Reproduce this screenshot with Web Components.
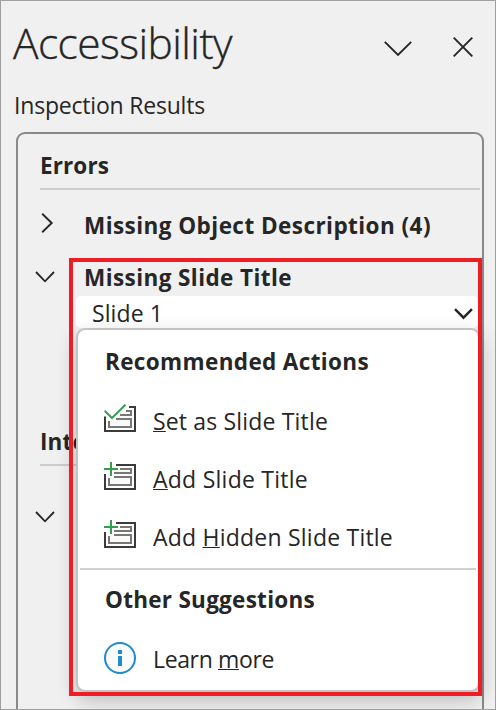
<!DOCTYPE html>
<html lang="en"><head><meta charset="utf-8"><title>Accessibility</title>
<style>
html,body{margin:0;height:100%;overflow:hidden}
body{font-family:"Open Sans","Noto Sans",sans-serif;color:#262626;background:#f0f0f0}
</style></head><body>
<a11y-pane></a11y-pane>
<script>
const define=(name,html,init)=>customElements.define(name,class extends HTMLElement{
  constructor(){super();this.attachShadow({mode:'open'}).innerHTML=html;}
  connectedCallback(){if(init)init.call(this);}
});

// One line of text, tracked so that it spans the width given in "span".
define('ui-text',`<style>
:host{display:block;box-sizing:border-box;font-size:23px;line-height:32px;height:32px;white-space:nowrap}
:host([bold]){font-weight:700;font-size:22.5px;padding-top:1px}
:host([title-size]){font-size:42.5px;line-height:60px;height:60px;font-weight:300;-webkit-text-stroke:.35px #262626}
span{display:inline-block}
::slotted(u){text-decoration:underline;text-decoration-thickness:1px;text-underline-offset:1px;text-decoration-skip-ink:none}
</style><span><slot></slot></span>`,function(){
  const s=this.shadowRoot.querySelector('span'),w=+this.getAttribute('span');
  const slot=s.firstChild;
  const fit=()=>{
    const n=slot.assignedNodes({flatten:true}).map(x=>x.textContent).join('').length;
    if(!w||!n)return;
    s.style.letterSpacing='0px';
    s.style.letterSpacing=(w-s.getBoundingClientRect().width)/n+'px';
  };
  slot.addEventListener('slotchange',fit);
  fit();
});

const shapes={
  down:[28,14,'<path d="M.8 .8L14 14 27.2 .8" stroke-width="1.9"/>'],
  close:[20,20,'<path d="M.7 .7L19.3 19.3M19.3 .7L.7 19.3" stroke-width="1.9"/>'],
  fold:[20,12,'<path d="M1 1L10 10.3 19 1" stroke-width="1.8"/>'],
  open:[12,20,'<path d="M1.2 .8L10.7 10 1.2 19.2" stroke-width="1.9"/>'],
  drop:[19,12,'<path d="M1 1.2L9.5 9.7 18 1.2" stroke-width="2.4"/>'],
  check:[32,28,'<path fill="#fafafa" stroke="none" d="M4 16L9 18 22 6H28V24H4Z"/><path stroke="#3b3b3b" stroke-width="2" d="M25 3H31V27H1V12.5"/><path stroke="#797774" stroke-width="2" d="M22 7H27V11H16M12 15H27V23H5V17"/><path stroke="#3a9e57" stroke-width="2" d="M.7 6.7L8 14 21.5 .7"/>'],
  add:[32,28,'<path fill="#fafafa" stroke="none" d="M5 15H27V23H5ZM14 6H27V11H10Z"/><path stroke="#3b3b3b" stroke-width="2" d="M12 3H31V27H1V12"/><path stroke="#797774" stroke-width="2" d="M16 7H27V11H10M10 15H27V23H5V16"/><path stroke="#34a04f" stroke-width="2" d="M0 7H14M7 0V14"/>'],
  info:[32,32,'<circle cx="16" cy="16" r="15" fill="#fafafa" stroke="#1e8bcd" stroke-width="2"/><path stroke="#1e8bcd" stroke-width="4" d="M16 8V12M16 14V24"/>']
};
define('ui-icon','<style>:host{display:block;flex:none}svg{display:block;fill:none;stroke:#262626;overflow:visible}</style><div></div>',function(){
  const shape=shapes[this.getAttribute('name')];
  if(!shape)return;
  const [w,h,p]=shape;
  this.shadowRoot.querySelector('div').innerHTML=`<svg width="${w}" height="${h}" viewBox="0 0 ${w} ${h}">${p}</svg>`;
});

define('pane-header',`<style>
:host{display:flex;box-sizing:border-box;align-items:flex-start;height:76px;padding:12px 22px 0 12px}
ui-text{flex:1}.d{margin:28px 41px 0 0}.c{margin-top:24px}
</style><ui-text title-size span="219"><slot></slot></ui-text><ui-icon class="d" name="down"></ui-icon><ui-icon class="c" name="close"></ui-icon>`);

define('result-group',`<style>
:host{display:block}header{margin-left:22px;height:39px;border-bottom:2px solid #cdcdcd}
</style><header><slot name="title"></slot></header><slot></slot>`);

define('result-row',`<style>
:host{display:grid;grid-template-columns:66px 1fr;height:32px}
div{padding:4px 0 0 23px}.o,:host([closed]) .f{display:none}:host([closed]) .o{display:block}
.f{padding:10px 0 0 17px}
</style><div class="o"><ui-icon name="open"></ui-icon></div><div class="f"><ui-icon name="fold"></ui-icon></div><slot></slot>`);

define('slide-item',`<style>
:host{display:flex;justify-content:space-between;align-items:center;box-sizing:border-box;height:32px;margin:3px 2px 0 58px;padding:0 5px 0 16px;background:#fff;border-radius:5px}
ui-icon{margin-top:4px}ui-text{margin-top:2px}
</style><ui-text span="71"><slot></slot></ui-text><ui-icon name="drop"></ui-icon>`);

define('action-item',`<style>
:host{display:grid;grid-template-columns:49px 1fr;height:58px}
ui-icon{margin-top:10px}::slotted(ui-text){margin-top:11px}
</style><ui-icon></ui-icon><slot></slot>`,function(){
  const old=this.shadowRoot.querySelector('ui-icon'),n=document.createElement('ui-icon');
  n.setAttribute('name',this.getAttribute('icon'));old.replaceWith(n);
});

define('action-menu',`<style>
:host{position:absolute;left:76px;top:328px;width:404px;height:364px;box-sizing:border-box;border:2px solid #c3c3c3;border-radius:9px;background:#fff;padding:15px 2px 0 2px;box-shadow:0 8px 20px rgba(0,0,0,.23)}
section{padding-left:24px}.h{margin-left:1px;height:49px}
hr{margin:0;height:2px;border:0;background:#d0d0d0}
.second{padding-top:13px}
</style>
<section><ui-text class="h" bold span="264">Recommended Actions</ui-text>
<action-item icon="check"><ui-text span="175"><u>S</u>et as Slide Title</ui-text></action-item>
<action-item icon="add"><ui-text span="155"><u>A</u>dd Slide Title</ui-text></action-item>
<action-item icon="add"><ui-text span="240">Add <u>H</u>idden Slide Title</ui-text></action-item></section>
<hr>
<section class="second"><ui-text class="h" bold span="210">Other Suggestions</ui-text>
<action-item icon="info"><ui-text span="121">Learn <u>m</u>ore</ui-text></action-item></section>`);

define('focus-frame','<style>:host{position:absolute;left:69px;top:258px;width:413px;height:438px;box-sizing:border-box;border:4px solid #ee1c25}</style>');

define('a11y-pane',`<style>
:host{display:block;position:relative;box-sizing:border-box;width:496px;height:710px;overflow:hidden;background:#f0f0f0;border:1px solid #a0a0a0}
.label{margin:12px 0 0 13px}
.results{box-sizing:border-box;width:468px;height:640px;margin:11px 0 0 15px;border:2px solid #898989;border-radius:9px;padding-top:15px}
.results result-group{margin-right:2px}
.first{margin-top:19px}.mid{margin-top:20px}.last{margin-top:97px}.end{margin-top:35px}
.over{position:absolute;left:-1px;top:-1px}
</style>
<pane-header>Accessibility</pane-header>
<ui-text class="label" span="191">Inspection Results</ui-text>
<div class="results">
<result-group><ui-text slot="title" bold span="69">Errors</ui-text>
<result-row class="first" closed><ui-text bold span="347">Missing Object Description (4)</ui-text></result-row>
<result-row class="mid"><ui-text bold span="208">Missing Slide Title</ui-text></result-row>
<slide-item>Slide 1</slide-item></result-group>
<result-group class="last"><ui-text slot="title" bold span="46">Inte</ui-text>
<result-row class="end"></result-row></result-group>
</div>
<div class="over"><action-menu></action-menu><focus-frame></focus-frame></div>`);
</script></body></html>
